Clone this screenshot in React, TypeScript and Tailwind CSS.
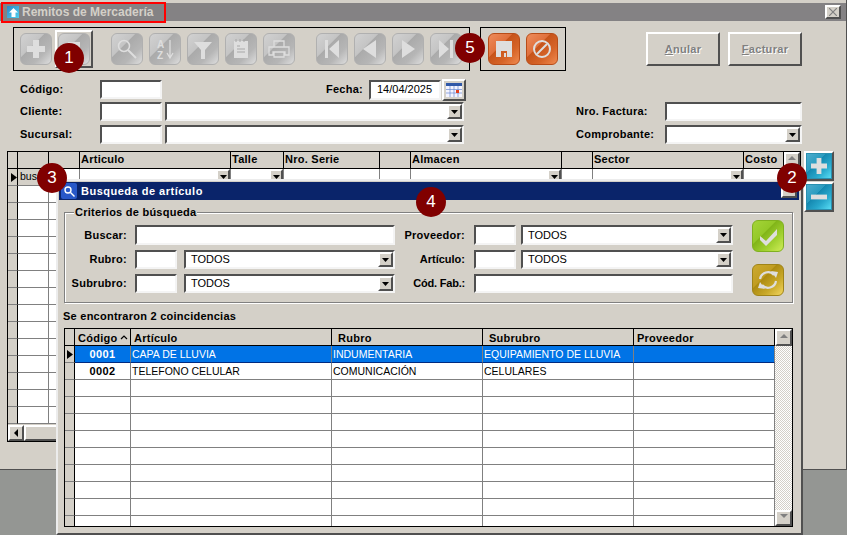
import type { ReactNode } from 'react';

const sunken = 'border-2 border-t-[#505050] border-l-[#505050] border-r-[#f4f4f4] border-b-[#f4f4f4] bg-white';
const raised = 'border-2 border-t-white border-l-white border-r-[#505050] border-b-[#505050] bg-[#d4d0c8]';
const label = 'font-bold text-[11px] tracking-[0.25px] text-black';

const tones = {
  gray: 'rounded-[6px] border-[#b0b0b0] bg-[linear-gradient(135deg,#d2d2d2_0%,#c4c4c4_38%,#aaaaaa_39%,#b6b6b6_70%,#dedede_100%)]',
  orange: 'rounded-[6px] border-[#b84c18] bg-[linear-gradient(135deg,#ee8c5c_0%,#e0703c_38%,#c6531a_39%,#d66428_68%,#f08a50_100%)]',
  blue: 'border-[#2a90b0] bg-[linear-gradient(135deg,#4eaccc_0%,#2a9cc0_38%,#1488b0_39%,#28a8cc_68%,#58dcf4_100%)]',
  green: 'rounded-[6px] border-[#80b020] bg-[linear-gradient(135deg,#a4d438_0%,#94c828_38%,#80b418_39%,#a0d030_68%,#cfec58_100%)]',
  gold: 'rounded-[6px] border-[#a08418] bg-[linear-gradient(135deg,#ccaa30_0%,#c09c20_38%,#ac8a10_39%,#c8a828_68%,#f2d660_100%)]',
};

function GlossBtn({ tone, size = 'w-[32px] h-[32px]', children }: { tone: keyof typeof tones; size?: string; children: ReactNode }) {
  return (
    <div className={`${size} shrink-0 border ${tones[tone]}`}>
      <svg viewBox="0 0 30 30" className="w-full h-full block">{children}</svg>
    </div>
  );
}

const ink = '#dedede';

function TextInput({ className, value }: { className: string; value?: string }) {
  return (
    <div className={`${sunken} ${className} shrink-0 flex items-center text-[11px] pl-[5px] text-black overflow-hidden`}>
      {value}
    </div>
  );
}

function ArrowBtn({ className }: { className: string }) {
  return (
    <div className={`${raised} ${className} shrink-0 flex items-center justify-center`}>
      <svg width="7" height="4" viewBox="0 0 7 4"><path d="M0 0h7L3.5 4z" fill="#000" /></svg>
    </div>
  );
}

function Select({ className, value }: { className: string; value?: string }) {
  return (
    <div className={`${sunken} ${className} shrink-0 flex items-center justify-between text-[11px] pl-[5px] text-black`}>
      <span>{value}</span>
      <ArrowBtn className="w-[15px] h-full" />
    </div>
  );
}

function ScrollArrow({ dir, className }: { dir: 'up' | 'down' | 'left'; className: string }) {
  const d = dir === 'up' ? 'M1 5L5 1L9 5z' : dir === 'down' ? 'M1 1L9 1L5 5z' : 'M7 1L7 9L3 5z';
  return (
    <div className={`${raised} ${className} shrink-0 flex items-center justify-center`}>
      <svg width="10" height="10" viewBox="0 0 10 10">
        <path d={d} fill={dir === 'left' ? '#000' : '#808080'} />
      </svg>
    </div>
  );
}

function Badge({ n, className }: { n: number; className: string }) {
  return (
    <div className={`absolute w-[30px] h-[30px] rounded-full bg-[#800000] text-white text-[17px] flex items-center justify-center ${className}`}>
      {n}
    </div>
  );
}

const rowMark = <svg width="6" height="9" viewBox="0 0 6 9"><path d="M0 0L6 4.5L0 9z" fill="#000" /></svg>;

const backCols = 'grid-cols-[10px_31px_31px_151px_53px_96px_31px_151px_31px_151px_40px]';
const backHead = ['', '', '', 'Articulo', 'Talle', 'Nro. Serie', '', 'Almacen', '', 'Sector', 'Costo'];
const backArrows = [3, 4, 7, 9];

function BackGrid() {
  return (
    <div className="w-[794px] h-[291px] border border-black flex shrink-0">
      <div className="w-[775px] flex flex-col">
        <div className={`grid ${backCols} h-[17px] border-b border-black`}>
          {backHead.map((h, i) => (
            <div key={i} className={`${label} border-r border-black bg-[#d4d0c8] pl-[1px] leading-[15px] overflow-hidden`}>{h}</div>
          ))}
        </div>
        <div className="h-[256px] overflow-hidden">
          {Array.from({ length: 15 }).map((_, r) => (
            <div key={r} className={`grid ${backCols} h-[17px]`}>
              {backHead.map((_h, i) => (
                <div
                  key={i}
                  className={`border-b border-r border-b-[#808080] flex items-center justify-end overflow-hidden ${
                    i === 0 ? 'border-r-black bg-[#d4d0c8] justify-center' : 'border-r-[#808080]'
                  } ${r === 0 && i === 1 ? 'bg-[#d4d0c8] !justify-start pl-[2px] text-[10.5px]' : ''} ${i > 0 && !(r === 0 && i === 1) ? 'bg-white' : ''}`}
                >
                  {r === 0 && i === 0 && rowMark}
                  {r === 0 && i === 1 && 'busc'}
                  {r === 0 && backArrows.includes(i) && <ArrowBtn className="w-[14px] h-[16px]" />}
                </div>
              ))}
            </div>
          ))}
        </div>
        <div className="h-[16px] flex bg-[#d4d0c8]">
          <ScrollArrow dir="left" className="w-[16px] h-[16px]" />
          <div className={`${raised} w-[40px] h-[16px]`} />
        </div>
      </div>
      <div className="w-[17px] flex flex-col border-l border-black">
        <ScrollArrow dir="up" className="w-[16px] h-[16px]" />
      </div>
    </div>
  );
}

const resultCols = 'grid-cols-[10px_56px_201px_151px_151px_141px]';
const resultHead = ['', 'Código', 'Artículo', 'Rubro', 'Subrubro', 'Proveedor'];
const results = [
  ['0001', 'CAPA DE LLUVIA', 'INDUMENTARIA', 'EQUIPAMIENTO DE LLUVIA', ''],
  ['0002', 'TELEFONO CELULAR', 'COMUNICACIÓN', 'CELULARES', ''],
];

function ResultGrid() {
  return (
    <div className="ml-[6px] mt-[5px] w-[729px] h-[199px] border border-black flex overflow-hidden">
      <div className="w-[710px] flex flex-col shrink-0">
        <div className={`grid ${resultCols} h-[17px] shrink-0 border-b border-black`}>
          {resultHead.map((h, i) => (
            <div key={i} className={`${label} bg-[#d4d0c8] border-r border-black pl-[3px] pt-[1px] leading-[16px] flex items-center gap-[3px] overflow-hidden ${i === 3 || i === 4 ? 'pl-[6px]' : ''}`}>
              {h}
              {i === 1 && (
                <svg width="8" height="5" viewBox="0 0 8 5"><path d="M1 4L4 1L7 4" fill="none" stroke="#000" strokeWidth="1.2" /></svg>
              )}
            </div>
          ))}
        </div>
        {Array.from({ length: 11 }).map((_, r) => {
          const row = results[r];
          const sel = r === 0;
          return (
            <div key={r} className={`grid ${resultCols} h-[17px] shrink-0`}>
              <div className="bg-[#d4d0c8] border-r border-r-black border-b border-b-[#808080] flex items-center justify-center">
                {sel && rowMark}
              </div>
              {[0, 1, 2, 3, 4].map((c) => (
                <div
                  key={c}
                  className={`border-r border-b border-r-[#808080] pt-[1px] flex items-center text-[10.5px] overflow-hidden whitespace-nowrap ${
                    sel ? 'bg-[#0073e6] text-white border-b-[#002a80]' : 'bg-white text-black border-b-[#808080]'
                  } ${c === 0 ? 'justify-center font-bold text-[11px] tracking-[0.4px]' : 'pl-[1px]'}`}
                >
                  {row ? row[c] : ''}
                </div>
              ))}
            </div>
          );
        })}
      </div>
      <div className="w-[17px] flex flex-col justify-between bg-[repeating-conic-gradient(#ffffff_0_25%,#d4d0c8_0_50%)] bg-[length:2px_2px]">
        <ScrollArrow dir="up" className="w-[17px] h-[17px]" />
        <ScrollArrow dir="down" className="w-[17px] h-[16px]" />
      </div>
    </div>
  );
}

function SearchDialog() {
  return (
    <div className="absolute left-[56px] top-[179px] w-[747px] h-[356px] bg-[#d4d0c8] border-2 border-t-[#ececec] border-l-[#ececec] border-r-[#505050] border-b-[#505050]">
      <div className="ml-[1px] mt-[1px] w-[740px] h-[18px] bg-[#0a246a] flex items-center relative">
        <div className="ml-[2px] w-[16px] h-[16px] rounded-[2px] bg-[#2858c8] flex items-center justify-center">
          <svg width="13" height="13" viewBox="0 0 13 13" fill="none" stroke="#fff" strokeWidth="1.4">
            <circle cx="5" cy="5" r="3" />
            <path d="M7.5 7.5L11.5 11.5" />
          </svg>
        </div>
        <span className="ml-[4px] font-bold text-[11px] tracking-[0.5px] text-white">Busqueda de artículo</span>
        <div className={`${raised} absolute right-[2px] top-[5px] w-[16px] h-[11px]`} />
      </div>

      <div className="relative ml-[6px] mt-[12px] w-[729px] h-[91px] border border-[#808080] shadow-[inset_1px_1px_0_#ffffff,1px_1px_0_#ffffff] flex">
        <span className={`${label} absolute left-[9px] top-[-7px] px-[1px] bg-[#d4d0c8] leading-[13px]`}>Criterios de búsqueda</span>
        <div className="pt-[12px] flex flex-col">
          <div className="flex items-center h-[20px] mb-[5px]">
            <span className={`${label} w-[62px] text-right mr-[8px]`}>Buscar:</span>
            <TextInput className="w-[260px] h-[20px]" />
            <span className={`${label} w-[70px] text-right mr-[9px]`}>Proveedor:</span>
            <TextInput className="w-[42px] h-[20px]" />
            <Select className="ml-[5px] w-[212px] h-[20px]" value="TODOS" />
          </div>
          <div className="flex items-center h-[19px] mb-[5px]">
            <span className={`${label} w-[62px] text-right mr-[8px]`}>Rubro:</span>
            <TextInput className="w-[42px] h-[19px]" />
            <Select className="ml-[7px] w-[211px] h-[19px]" value="TODOS" />
            <span className={`${label} !tracking-[0px] w-[70px] text-right mr-[9px]`}>Artículo:</span>
            <TextInput className="w-[42px] h-[19px]" />
            <Select className="ml-[5px] w-[212px] h-[19px]" value="TODOS" />
          </div>
          <div className="flex items-center h-[19px]">
            <span className={`${label} w-[62px] text-right mr-[8px]`}>Subrubro:</span>
            <TextInput className="w-[42px] h-[19px]" />
            <Select className="ml-[7px] w-[211px] h-[19px]" value="TODOS" />
            <span className={`${label} !tracking-[-0.2px] w-[70px] text-right mr-[9px]`}>Cód. Fab.:</span>
            <TextInput className="w-[259px] h-[19px]" />
          </div>
        </div>
        <div className="ml-[19px] pt-[7px] flex flex-col gap-[12px]">
          <GlossBtn tone="green">
            <path d="M7 15L13 20L24 8L24 14L13 25L7 19z" fill={ink} />
          </GlossBtn>
          <GlossBtn tone="gold">
            <path d="M7 14a8 8 0 0 1 14-4" fill="none" stroke={ink} strokeWidth="2.2" />
            <path d="M23 16a8 8 0 0 1-14 4" fill="none" stroke={ink} strokeWidth="2.2" />
            <path d="M18 6L25 7L23 13z" fill={ink} />
            <path d="M12 24L5 23L7 17z" fill={ink} />
          </GlossBtn>
        </div>
      </div>

      <div className={`${label} ml-[5px] mt-[6px] h-[14px] leading-[14px]`}>Se encontraron 2 coincidencias</div>
      <ResultGrid />
    </div>
  );
}

export default function App() {
  return (
    <div className="relative w-[847px] h-[535px] overflow-hidden bg-[#949693] font-['Liberation_Sans',sans-serif]">
      <div className="h-[470px] bg-[#d4d0c8] border-r border-b border-[#505050] pt-[3px] flex flex-col">
        {/* title bar */}
        <div className="h-[18px] bg-[#848284] flex items-center shrink-0 justify-between">
          <div className="flex items-center">
            <div className="ml-[7px] w-[12px] h-[12px] bg-[linear-gradient(135deg,#2a88c8,#50d0f0)] flex items-center justify-center">
              <svg width="9" height="9" viewBox="0 0 9 9"><path d="M4.5 0L9 4.5H6.5V9h-4V4.5H0z" fill="#fff" /></svg>
            </div>
            <span className="ml-[3px] font-bold text-[12px] text-[#d4d0c8]">Remitos de Mercadería</span>
          </div>
          <div className={`${raised} mr-[5px] w-[16px] h-[14px] flex items-center justify-center`}>
            <svg width="8" height="8" viewBox="0 0 8 8"><path d="M0 0L8 8M8 0L0 8" stroke="#808080" strokeWidth="1.2" /></svg>
          </div>
        </div>

        {/* toolbar */}
        <div className="flex items-start pl-[13px] pt-[6px] shrink-0">
          <div className="w-[457px] h-[44px] border border-black pl-[6px] pt-[5px] flex gap-[6px]">
            <GlossBtn tone="gray">
              <path d="M12 6h6v6h6v6h-6v6h-6v-6H6v-6h6z" fill={ink} />
            </GlossBtn>
            <div className={`${raised} w-[38px] h-[38px] m-[-3px] shrink-0 flex items-center justify-center`}>
              <GlossBtn tone="gray">
                <path d="M9 8h12v16H9z" fill={ink} />
              </GlossBtn>
            </div>
            <div className="ml-[15px]">
              <GlossBtn tone="gray">
                <circle cx="12" cy="12" r="5.5" fill="none" stroke={ink} strokeWidth="1.5" />
                <path d="M16 16L24 24" stroke={ink} strokeWidth="2" />
              </GlossBtn>
            </div>
            <GlossBtn tone="gray">
              <text x="7" y="14" fontSize="10" fontWeight="700" fill={ink} fontFamily="Liberation Sans">A</text>
              <text x="7" y="25" fontSize="10" fontWeight="700" fill={ink} fontFamily="Liberation Sans">Z</text>
              <path d="M20 6V23M17 19L20 24L23 19" fill="none" stroke={ink} strokeWidth="1.3" />
            </GlossBtn>
            <GlossBtn tone="gray">
              <path d="M6 8H24L17 16V25H13V16z" fill={ink} />
            </GlossBtn>
            <GlossBtn tone="gray">
              <path d="M8 7h14v17H8z" fill={ink} />
              <path d="M10 5v3M14 5v3M18 5v3M11 12h3M11 15h8M11 18h8" stroke="#a8a8a8" strokeWidth="1" />
            </GlossBtn>
            <GlossBtn tone="gray">
              <path d="M10 7h10v6H10zM5 13h20v8h-4v-3H9v3H5zM10 18h10v5H10z" fill="none" stroke={ink} strokeWidth="1.3" />
            </GlossBtn>
            <div className="ml-[15px]">
              <GlossBtn tone="gray">
                <path d="M8 6h3v18H8zM22 6v18L12 15z" fill={ink} />
              </GlossBtn>
            </div>
            <GlossBtn tone="gray">
              <path d="M21 6v18L8 15z" fill={ink} />
            </GlossBtn>
            <GlossBtn tone="gray">
              <path d="M9 6v18l13-9z" fill={ink} />
            </GlossBtn>
            <GlossBtn tone="gray">
              <path d="M19 6h3v18h-3zM8 6v18l10-9z" fill={ink} />
            </GlossBtn>
          </div>
          <div className="ml-[10px] w-[86px] h-[44px] border border-black pl-[7px] pt-[5px] flex gap-[6px]">
            <GlossBtn tone="orange">
              <path d="M7 7h16v16h-5v-6h-6v6H7z" fill={ink} />
              <path d="M15 19h2v4h-2z" fill={ink} />
            </GlossBtn>
            <GlossBtn tone="orange">
              <circle cx="15" cy="15" r="8" fill="none" stroke={ink} strokeWidth="2" />
              <path d="M10 20L20 10" stroke={ink} strokeWidth="2" />
            </GlossBtn>
          </div>
          <button className={`${raised} ml-[80px] mt-[5px] w-[74px] h-[34px] font-bold text-[11px] tracking-[0.3px] text-[#808080] [text-shadow:1px_1px_0_#ffffff]`}>
            <span className="underline">A</span>nular
          </button>
          <button className={`${raised} ml-[8px] mt-[5px] w-[74px] h-[34px] font-bold text-[11px] tracking-[0.3px] text-[#808080] [text-shadow:1px_1px_0_#ffffff]`}>
            <span className="underline">F</span>acturar
          </button>
        </div>

        {/* form */}
        <div className="pl-[20px] pt-[9px] flex flex-col shrink-0">
          <div className="flex items-center h-[19px] mb-[3px]">
            <span className={`${label} w-[80px]`}>Código:</span>
            <TextInput className="w-[62px] h-[19px]" />
            <span className={`${label} ml-[164px] w-[43px]`}>Fecha:</span>
            <TextInput className="w-[72px] h-[20px] !pl-[6px]" value="14/04/2025" />
            <div className={`${raised} ml-[1px] w-[24px] h-[22px] flex items-center justify-center`}>
              <svg width="16" height="14" viewBox="0 0 16 14">
                <rect width="16" height="14" fill="#f4f4ff" />
                <rect width="16" height="3" fill="#3058a8" />
                <path d="M0 6.5h16M0 10h16M4 3v11M8 3v11M12 3v11" stroke="#6888d0" strokeWidth="0.7" />
                <rect x="10" y="7" width="3" height="3" fill="#e04020" />
              </svg>
            </div>
          </div>
          <div className="flex items-center h-[19px] mb-[4px]">
            <span className={`${label} w-[80px]`}>Cliente:</span>
            <TextInput className="w-[62px] h-[19px]" />
            <Select className="ml-[3px] w-[299px] h-[19px]" />
            <span className={`${label} ml-[112px] w-[89px]`}>Nro. Factura:</span>
            <TextInput className="w-[137px] h-[19px]" />
          </div>
          <div className="flex items-center h-[19px]">
            <span className={`${label} w-[80px]`}>Sucursal:</span>
            <TextInput className="w-[62px] h-[19px]" />
            <Select className="ml-[3px] w-[299px] h-[19px]" />
            <span className={`${label} ml-[112px] w-[89px]`}>Comprobante:</span>
            <Select className="w-[137px] h-[19px]" />
          </div>
        </div>

        {/* grid and side buttons */}
        <div className="pl-[7px] pt-[7px] flex items-start gap-[3px]">
          <BackGrid />
          <div className="flex flex-col gap-[1px]">
            <div className={`${raised} w-[30px] h-[30px]`}>
              <GlossBtn tone="blue" size="w-[26px] h-[26px]">
                <path d="M12 5h6v7h7v6h-7v7h-6v-7H5v-6h7z" fill={ink} />
              </GlossBtn>
            </div>
            <div className={`${raised} w-[30px] h-[30px]`}>
              <GlossBtn tone="blue" size="w-[26px] h-[26px]">
                <path d="M5 12h20v6H5z" fill={ink} />
              </GlossBtn>
            </div>
          </div>
        </div>
      </div>

      <SearchDialog />

      <div className="absolute left-[1px] top-[2px] w-[165px] h-[21px] border-2 border-[#ff0000]" />
      <Badge n={1} className="left-[54px] top-[43px]" />
      <Badge n={2} className="left-[777px] top-[163px]" />
      <Badge n={3} className="left-[37px] top-[163px]" />
      <Badge n={4} className="left-[416px] top-[187px]" />
      <Badge n={5} className="left-[455px] top-[33px]" />
    </div>
  );
}
